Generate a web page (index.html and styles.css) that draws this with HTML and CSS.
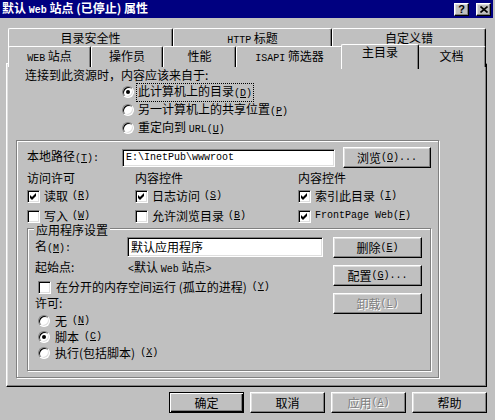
FILE: index.html
```html
<!DOCTYPE html>
<html lang="zh-CN">
<head>
<meta charset="utf-8">
<link rel="stylesheet" href="styles.css">
</head>
<body>
<div class="win">
  <div class="titlebar">
    <span class="title">默认 <span class="en">Web</span> 站点 (已停止) 属性</span>
    <div class="capbtns">
      <span class="capbtn">?</span>
      <span class="capbtn"><svg width="8" height="7" viewBox="0 0 8 7"><path d="M0.5 0.5 L7.5 6.5 M7.5 0.5 L0.5 6.5" stroke="#000" stroke-width="1.6"/></svg></span>
    </div>
  </div>

  <div class="tabs">
    <div class="tabrow back">
      <div class="tab">目录安全性</div>
      <div class="tab"><span class="en">HTTP</span> 标题</div>
      <div class="tab">自定义错</div>
    </div>
    <div class="tabrow front">
      <div class="tab"><span class="en">WEB</span> 站点</div>
      <div class="tab">操作员</div>
      <div class="tab">性能</div>
      <div class="tab"><span class="en">ISAPI</span> 筛选器</div>
      <div class="tab sel">主目录</div>
      <div class="tab">文档</div>
    </div>
  </div>

  <div class="panel">
    <div class="intro">连接到此资源时，内容应该来自于:</div>
    <div class="radios">
      <div class="opt"><span class="radio on"></span><span class="focus">此计算机上的目录<span class="en">(<u>D</u>)</span></span></div>
      <div class="opt"><span class="radio"></span><span class="otext">另一计算机上的共享位置<span class="en">(<u>P</u>)</span></span></div>
      <div class="opt"><span class="radio"></span><span class="otext">重定向到 <span class="en">URL(<u>U</u>)</span></span></div>
    </div>

    <div class="grp outer">
      <div class="pathrow">
        <span class="plabel">本地路径<span class="en">(<u>T</u>):</span></span>
        <div class="input path"><span class="en">E:\InetPub\wwwroot</span></div>
        <div class="btn browse">浏览<span class="en">(<u>O</u>)...</span></div>
      </div>
      <div class="cols heads">
        <span>访问许可</span>
        <span>内容控件</span>
        <span>内容控件</span>
      </div>
      <div class="cols checks">
        <div class="chk"><span class="cb"><svg width="7" height="7" viewBox="0 0 7 7"><path d="M0 2 L2 4 L6 0 L6 3 L2 7 L0 5 Z" fill="#000"/></svg></span>读取<span class="en">(<u>R</u>)</span></div>
        <div class="chk"><span class="cb"><svg width="7" height="7" viewBox="0 0 7 7"><path d="M0 2 L2 4 L6 0 L6 3 L2 7 L0 5 Z" fill="#000"/></svg></span>日志访问<span class="en">(<u>S</u>)</span></div>
        <div class="chk"><span class="cb"><svg width="7" height="7" viewBox="0 0 7 7"><path d="M0 2 L2 4 L6 0 L6 3 L2 7 L0 5 Z" fill="#000"/></svg></span>索引此目录<span class="en">(<u>I</u>)</span></div>
        <div class="chk"><span class="cb"></span>写入<span class="en">(<u>W</u>)</span></div>
        <div class="chk"><span class="cb"></span>允许浏览目录<span class="en">(<u>B</u>)</span></div>
        <div class="chk"><span class="cb"><svg width="7" height="7" viewBox="0 0 7 7"><path d="M0 2 L2 4 L6 0 L6 3 L2 7 L0 5 Z" fill="#000"/></svg></span><span class="en">FrontPage Web(<u>F</u>)</span></div>
      </div>

      <div class="grp inner">
        <span class="glabel">应用程序设置</span>
        <div class="leftcol">
          <div class="namerow">
            <span class="nlabel">名<span class="en">(<u>M</u>):</span></span>
            <div class="input name">默认应用程序</div>
          </div>
          <div class="startrow">
            <span class="slabel">起始点:</span>
            <span><span class="en">&lt;</span>默认 <span class="en">Web</span> 站点<span class="en">&gt;</span></span>
          </div>
          <div class="chk isol"><span class="cb"></span>在分开的内存空间运行 (孤立的进程)<span class="en">(<u>Y</u>)</span></div>
          <div class="perm">许可:</div>
          <div class="opt2"><span class="radio"></span>无<span class="en">(<u>N</u>)</span></div>
          <div class="opt2"><span class="radio on"></span>脚本<span class="en">(<u>C</u>)</span></div>
          <div class="opt2"><span class="radio"></span>执行(包括脚本)<span class="en">(<u>X</u>)</span></div>
        </div>
        <div class="rightcol">
          <div class="btn">删除<span class="en">(<u>E</u>)</span></div>
          <div class="btn">配置<span class="en">(<u>G</u>)...</span></div>
          <div class="btn dis">卸载<span class="en">(<u>L</u>)</span></div>
        </div>
      </div>
    </div>
  </div>

  <div class="footer">
    <div class="btn def">确定</div>
    <div class="btn">取消</div>
    <div class="btn dis">应用<span class="en">(<u>A</u>)</span></div>
    <div class="btn">帮助</div>
  </div>
</div>
</body>
</html>
```
FILE: styles.css
```css
* { box-sizing: border-box; margin: 0; padding: 0; }
body {
  width: 495px; height: 420px; overflow: hidden;
  background: #c0c0c0;
  font-family: "Noto Sans CJK SC", "Liberation Sans", sans-serif;
  font-size: 12px; line-height: 16px; color: #000;
}
.en { font-family: "Liberation Mono", "DejaVu Sans Mono", monospace; font-size: 10px; }
u { text-decoration: underline; text-underline-offset: 1px; }

.titlebar {
  height: 18px; width: 493px; background: #000080; color: #fff;
  display: flex; align-items: center; justify-content: space-between;
  padding: 0 2px 0 2px;
}
.title { font-weight: bold; line-height: 18px; white-space: nowrap; }
.capbtns { display: flex; gap: 7px; }
.capbtn {
  width: 15px; height: 13px; background: #c0c0c0; color: #000;
  border: 1px solid; border-color: #fff #000 #000 #fff;
  box-shadow: inset -1px -1px #808080, inset 1px 1px #dfdfdf;
  font: bold 11px/11px "Liberation Sans", sans-serif;
  display: flex; align-items: center; justify-content: center;
}

.tabs { margin-top: 10px; padding-left: 8px; }
.tabrow { display: grid; }
.back { grid-template-columns: 165px 159px 154px; height: 18px; }
.front { grid-template-columns: 83px 72px 73px 107px 74px 69px; height: 17px; }
.tab {
  border-top: 1px solid #fff; border-left: 1px solid #fff; border-right: 1px solid #000;
  box-shadow: inset -1px 0 #808080;
  border-radius: 2px 2px 0 0;
  text-align: center; line-height: 16px; padding-top: 1px; white-space: nowrap;
  background: #c0c0c0;
}
.tab.sel {
  margin: -2px -2px -2px -2px; position: relative; z-index: 1;
  padding-top: 0; line-height: 14px;
}

.panel {
  margin-left: 6px; width: 481px; height: 324px;
  border: 1px solid; border-color: #fff #000 #000 #fff;
  box-shadow: inset -1px -1px #808080, inset 1px 1px #dfdfdf;
}
.intro { margin: 3px 0 0 18px; height: 16px; }
.radios { margin-left: 115px; }
.opt { display: flex; align-items: center; height: 18px; gap: 2px; }
.focus { border: 1px dotted #000; line-height: 14px; padding: 0 1px; }
.otext { padding: 0 2px; }
.radio {
  width: 12px; height: 12px; border-radius: 50%; background: #fff; flex: none;
  border: 1px solid; border-color: #808080 #fff #fff #808080;
  box-shadow: inset 1px 1px #000, inset -1px -1px #dfdfdf;
  display: flex; align-items: center; justify-content: center;
}
.radio.on::after { content: ""; width: 4px; height: 4px; border-radius: 50%; background: #000; }

.cb {
  width: 13px; height: 13px; background: #fff; flex: none;
  border: 1px solid; border-color: #808080 #fff #fff #808080;
  box-shadow: inset 1px 1px #000, inset -1px -1px #dfdfdf;
  display: flex; align-items: center; justify-content: center;
}
.chk { display: flex; align-items: center; gap: 4px; white-space: nowrap; }

.grp { border: 1px solid #808080; box-shadow: inset 1px 1px #fff, 1px 1px #fff; }
.outer { margin: 3px 0 0 9px; width: 423px; height: 238px; }

.pathrow { margin-top: 6px; height: 21px; padding-left: 10px; display: flex; align-items: center; }
.plabel { width: 95px; }
.input {
  background: #fff; height: 18px;
  border: 1px solid; border-color: #808080 #fff #fff #808080;
  box-shadow: inset 1px 1px #000, inset -1px -1px #dfdfdf;
  padding: 0 2px 0 3px; display: flex; align-items: center; white-space: nowrap;
}
.path { width: 213px; }
.btn {
  height: 21px; background: #c0c0c0;
  border: 1px solid; border-color: #fff #000 #000 #fff;
  box-shadow: inset -1px -1px #808080, inset 1px 1px #dfdfdf;
  display: flex; align-items: center; justify-content: center; white-space: nowrap;
}
.browse { width: 88px; margin-left: 8px; }
.btn.dis { color: #808080; text-shadow: 1px 1px 0 #fff; }
.btn.def {
  border-color: #000;
  box-shadow: inset 1px 1px #fff, inset -1px -1px #000, inset -2px -2px #808080;
}

.cols { display: grid; grid-template-columns: 108px 163px 1fr; padding-left: 10px; }
.heads { margin-top: 2px; height: 16px; }
.checks { grid-auto-rows: 20px; align-items: center; line-height: 14px; margin-bottom: 1px; }

.inner { position: relative; margin: 2px 0 0 10px; width: 404px; height: 143px;
  display: grid; grid-template-columns: 305px 89px; }
.glabel { position: absolute; top: -5px; left: 6px; background: #c0c0c0; padding: 0 2px; line-height: 12px; }
.namerow { margin-top: 8px; height: 20px; padding-left: 7px; display: flex; align-items: center; }
.nlabel { width: 92px; }
.name { width: 196px; height: 20px; }
.startrow { margin-top: 2px; height: 16px; padding-left: 7px; display: flex; }
.slabel { width: 93px; }
.isol { margin-top: 4px; height: 16px; padding-left: 10px; gap: 5px; }
.perm { height: 16px; padding-left: 7px; }
.opt2 { height: 16px; padding-left: 10px; display: flex; align-items: center; gap: 5px; }
.perm + .opt2 { margin-top: 2px; }
.rightcol { margin-top: 8px; display: flex; flex-direction: column; gap: 7px; }

.footer { width: 487px; margin-top: 5px; display: flex; justify-content: flex-end; gap: 6px; }
.footer .btn { width: 75px; }
```
